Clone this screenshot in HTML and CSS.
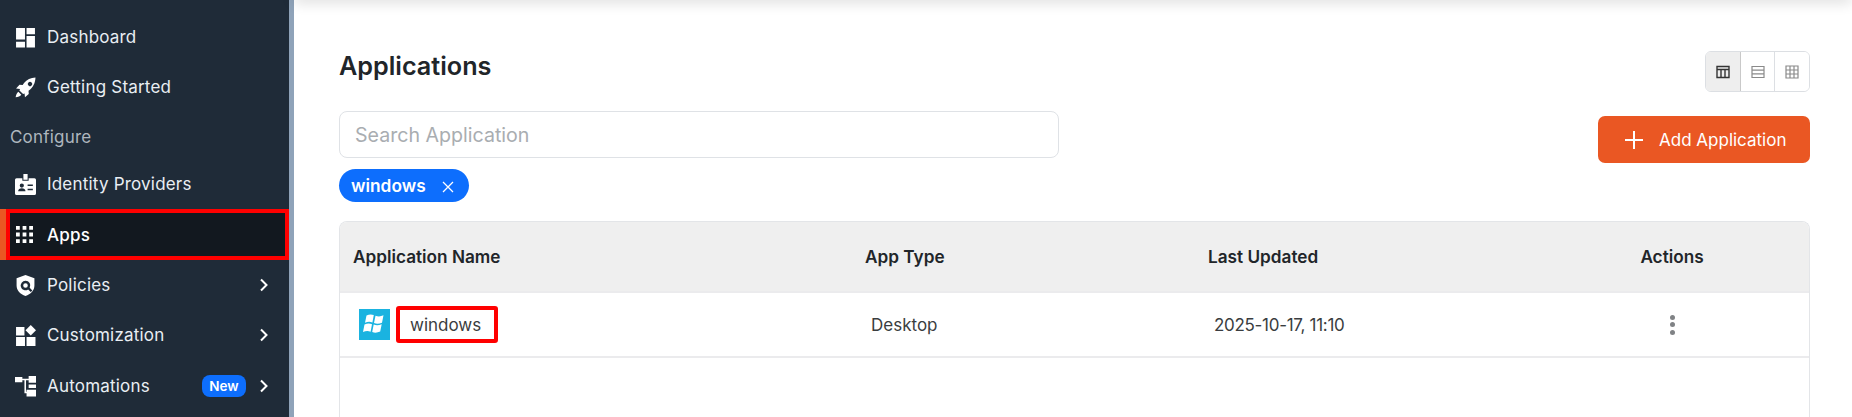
FILE: index.html
```html
<!DOCTYPE html>
<html lang="en">
<head>
<meta charset="utf-8">
<title>Applications</title>
<link rel="stylesheet" href="styles.css">
</head>
<body>
<aside class="sidebar">
  <nav class="nav">
    <a class="nav-item"><svg class="nav-icon" viewBox="0 0 20 20"><path d="M1 1h8.500v11H1zM11 1h8v6h-8zM1 14h8.500v5.500H1zM11 8.500h8v11h-8z"/></svg><span>Dashboard</span></a>
    <a class="nav-item"><svg class="nav-icon" viewBox="0 0 20 20"><path fill-rule="evenodd" d="M19.500.5C15 .7 11.200 2.300 8.600 5.800L7.300 7.500 4.300 7.300 1 11l3.800.4-.6 1.400 3.500 3.500 1.400-.7.4 3.800 3.600-3.300-.2-3C17.500 10 19.300 5.500 19.500.5zM12.800 5.200a2.100 2.100 0 1 1 3 3 2.100 2.100 0 0 1-3-3zM3.200 14C1.800 15 1 17 .6 19.400c2.400-.4 4.400-1.200 5.400-2.600z"/></svg><span>Getting Started</span></a>
    <div class="nav-label">Configure</div>
    <a class="nav-item"><svg class="nav-icon" viewBox="0 0 20 20"><path fill-rule="evenodd" d="M8 0h4v5.500H8zM1.500 4H7v2.500h6V4h5.500A1.500 1.500 0 0 1 20 5.500v13a1.500 1.500 0 0 1-1.500 1.500h-17A1.500 1.500 0 0 1 0 18.500v-13A1.500 1.500 0 0 1 1.500 4zM6.500 9a2 2 0 1 0 0 4 2 2 0 0 0 0-4zM3 16.500h7c0-2-1.500-3-3.500-3s-3.500 1-3.500 3zM12 10v1.500h5V10zM12 14v1.500h5V14z"/></svg><span>Identity Providers</span></a>
    <a class="nav-item active"><svg class="nav-icon small" viewBox="0 0 18 18"><path d="M0 0h4v4H0zM7 0h4v4H7zM14 0h4v4h-4zM0 7h4v4H0zM7 7h4v4H7zM14 7h4v4h-4zM0 14h4v4H0zM7 14h4v4H7zM14 14h4v4h-4z"/></svg><span>Apps</span></a>
    <a class="nav-item"><svg class="nav-icon" viewBox="0 0 20 20"><path fill-rule="evenodd" d="M10 0l8.500 3v7c0 4.500-3.500 8.500-8.500 10-5-1.500-8.500-5.500-8.500-10V3zM10 5.500a4.500 4.500 0 1 0 2.500 8.200l2.500 2.500 1.500-1.500-2.500-2.500A4.500 4.500 0 0 0 10 5.500zM10 7.800a2.200 2.200 0 1 1 0 4.400 2.200 2.200 0 0 1 0-4.400z"/></svg><span>Policies</span><svg class="chevron" viewBox="0 0 10 14"><path d="M2 1.500 7.500 7 2 12.500"/></svg></a>
    <a class="nav-item"><svg class="nav-icon" viewBox="0 0 20 20"><path d="M1 2h8v8H1zM15 0l5 5-5 5-5-5zM1 11.500h8.500V20H1zM11 11.500h8.500V20H11z"/></svg><span>Customization</span><svg class="chevron" viewBox="0 0 10 14"><path d="M2 1.500 7.500 7 2 12.500"/></svg></a>
    <a class="nav-item last"><svg class="nav-icon" viewBox="0 0 20 20"><path d="M0 1h7v5H0zM13 0h7v6.500h-7zM13 8h7v3.500h-7zM11 13h9v6.500h-9zM7 2.500h6V4h-2.500v11H11v1.500H9V4H7z"/></svg><span>Automations</span><span class="badge">New</span><svg class="chevron" viewBox="0 0 10 14"><path d="M2 1.500 7.500 7 2 12.500"/></svg></a>
  </nav>
</aside>
<main class="main">
  <div class="top-shadow"></div>
  <header class="title-row">
    <h1 class="title">Applications</h1>
    <div class="view-toggle">
      <button class="view-btn on"><svg viewBox="0 0 14 14"><path d="M1 1.500h12v11H1zM1 4.500h12M5 4.500v8M9 4.500v8"/></svg></button>
      <button class="view-btn"><svg viewBox="0 0 14 14"><path d="M1 1.500h12v11H1zM1 5.200h12M1 8.800h12"/></svg></button>
      <button class="view-btn"><svg viewBox="0 0 14 14"><path d="M1 1h12v12H1zM1 5h12M1 9h12M5 1v12M9 1v12"/></svg></button>
    </div>
  </header>
  <section class="search-row">
    <div class="search-col">
      <div class="search">Search Application</div>
      <div class="chip">windows<svg viewBox="0 0 12 12"><path d="M1 1l10 10M11 1 1 11"/></svg></div>
    </div>
    <button class="add-btn"><svg viewBox="0 0 18 18"><path d="M9 0v18M0 9h18"/></svg>Add Application</button>
  </section>
  <section class="table">
    <div class="row head">
      <div>Application Name</div>
      <div>App Type</div>
      <div>Last Updated</div>
      <div class="center">Actions</div>
    </div>
    <div class="row body">
      <div class="name">
        <svg class="win" viewBox="0 0 31 31"><rect width="31" height="31" fill="#1ab3e0"/><path fill="#fff" d="M7.500 6.500c2.700-1.300 5-1.300 7.300-.4l-1.400 7.400c-2.300-.9-4.600-.9-7.400.3zM16.500 6.700c2.500 1 5 1 8-.4l-1.500 7.400c-3 1.300-5.500 1.300-8 .4zM5.500 15.500c2.800-1.200 5-1.200 7.500-.3l-1.400 7.500c-2.400-.9-4.800-.9-7.600.4zM14.700 15.600c2.400.9 5 .9 8-.4l-1.500 7.400c-3 1.300-5.600 1.300-8 .5z"/></svg>
        <span class="name-box">windows</span>
      </div>
      <div class="cell">Desktop</div>
      <div class="cell date">2025-10-17, 11:10</div>
      <div class="center kebab"><i></i><i></i><i></i></div>
    </div>
  </section>
</main>
</body>
</html>
```
FILE: styles.css
```css
* { box-sizing: border-box; }
html, body { margin: 0; height: 417px; overflow: hidden; }
body { display: flex; background: #fff; font-family: "Inter", "Noto Sans", sans-serif; color: #212529; }

.sidebar { width: 294px; flex: none; height: 417px; background: #1f2b38; border-right: 5px solid #8fa3b9; }
.nav { display: flex; flex-direction: column; padding-top: 12px; }
.nav-item { display: flex; align-items: center; height: 50px; padding-left: 15px; color: #e9eef3; font-size: 17px; letter-spacing: .2px; font-weight: 400; }
.nav-icon { width: 21px; height: 21px; fill: #fff; flex: none; margin-right: 11px; }
.nav-icon.small { width: 17px; height: 17px; margin-right: 14px; }
.nav-label { display: flex; align-items: center; height: 50px; margin-bottom: -3px; padding-left: 10px; color: #aeb6be; font-size: 17px; letter-spacing: .2px; }
.active { height: 51px; margin-left: 6px; padding-left: 6px; color: #fff; font-weight: 500; background: #12181f; border: 4px solid #f00; box-shadow: -6px 0 0 #ea5723; }
.last { margin-top: 1px; }
.chevron { width: 10px; height: 14px; margin: 0 20px 0 auto; fill: none; stroke: #fff; stroke-width: 2; }
.badge { margin-left: auto; width: 44px; height: 22px; display: flex; align-items: center; justify-content: center; background: #0d6efd; color: #fff; border-radius: 8px; font-size: 13.500px; letter-spacing: 0; font-weight: 600; }
.badge + .chevron { margin-left: 13px; }

.main { flex: 1; min-width: 0; position: relative; padding: 0 42px 0 45px; }
.top-shadow { position: absolute; left: 0; right: 0; top: -10px; height: 10px; box-shadow: 0 2px 14px rgba(0, 0, 0, .16); }

.title-row { display: flex; justify-content: space-between; align-items: flex-start; padding-top: 51px; height: 111px; }
.title { margin: 0; font-size: 25.200px; line-height: 30px; font-weight: 600; color: #212529; }
.view-toggle { display: flex; width: 105px; height: 41px; border: 1px solid #dcdfe3; border-radius: 6px; overflow: hidden; }
.view-btn { flex: 1; padding: 0; display: flex; align-items: center; justify-content: center; background: #fff; border: 0; border-right: 1px solid #dcdfe3; }
.view-btn:last-child { border-right: 0; }
.view-btn svg { width: 14px; height: 14px; fill: none; stroke: #8a8a8a; stroke-width: 1.200; }
.view-btn.on { background: #eee; border-right-color: #c9c9c9; }
.view-btn.on svg { stroke: #333; stroke-width: 1.400; }

.search-row { display: flex; justify-content: space-between; align-items: flex-start; height: 110px; }
.search-col { width: 720px; display: flex; flex-direction: column; align-items: flex-start; gap: 11px; }
.search { width: 100%; height: 47px; padding: 1px 0 0 15px; display: flex; align-items: center; border: 1px solid #dfe2e6; border-radius: 8px; color: #a9adb1; font-size: 19.600px; }
.chip { height: 33px; width: 130px; padding: 0 12px; display: flex; align-items: center; justify-content: space-between; background: #0d6efd; border-radius: 17px; color: #fff; font-size: 17.300px; font-weight: 600; }
.chip svg { width: 12px; height: 12px; margin-right: 3px; margin-top: 2px; fill: none; stroke: #fff; stroke-width: 1.300; }
.add-btn { width: 212px; height: 47px; margin-top: 5px; display: flex; align-items: center; padding: 0 0 0 27px; gap: 16px; border: 0; border-radius: 7px; background: #ea5723; color: #fff; font: 400 17px "Inter", "Noto Sans", sans-serif; }
.add-btn svg { width: 18px; height: 18px; fill: none; stroke: #fff; stroke-width: 2; }

.table { height: 196px; border: 1px solid #e3e5e8; border-bottom: 0; border-radius: 8px 8px 0 0; overflow: hidden; }
.row { display: grid; grid-template-columns: 512px 343px 340px 1fr; align-items: center; border-bottom: 2px solid #ebebed; }
.head { height: 71px; background: #efefef; font-size: 17.200px; font-weight: 600; color: #212529; }
.head > div { padding-left: 13px; }
.head > .center { padding-left: 0; }
.center { text-align: center; }
.body { height: 65px; font-size: 17px; color: #3a3d40; }
.cell { padding-left: 19px; }
.date { letter-spacing: -.3px; }
.name { display: flex; align-items: center; padding-left: 19px; gap: 6px; }
.win { width: 31px; height: 31px; flex: none; }
.name-box { width: 102px; height: 37px; padding-left: 10px; display: flex; align-items: center; border: 4px solid #f00; border-radius: 3px; }
.kebab { display: flex; flex-direction: column; align-items: center; gap: 2.500px; }
.kebab i { width: 5px; height: 5px; border-radius: 50%; background: #808285; }
```
